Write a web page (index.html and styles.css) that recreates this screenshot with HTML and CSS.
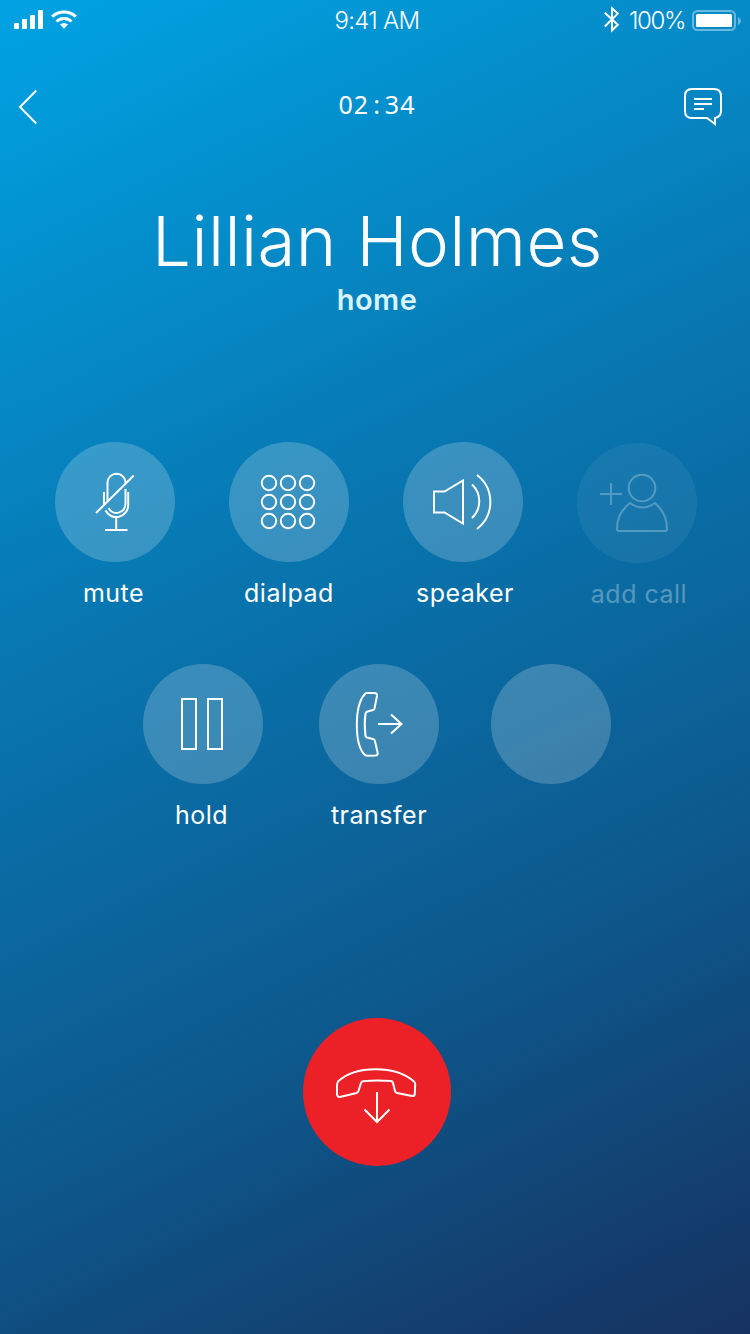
FILE: index.html
```html
<!DOCTYPE html>
<html lang="en">
<head>
    <meta charset="UTF-8">
    <meta name="viewport" content="width=device-width, initial-scale=1.0">
    <title>Call</title>
    <link rel="stylesheet" href="styles.css">
</head>
<body>
    <div class="status-bar">
        <div class="status-left">
            <svg class="signal" width="30" height="20" viewBox="0 0 30 20" fill="#fff">
                <rect x="0" y="13" width="5" height="6" rx="1"/>
                <rect x="8" y="9" width="5" height="10" rx="1"/>
                <rect x="16" y="5" width="5" height="14" rx="1"/>
                <rect x="24" y="0" width="5" height="19" rx="1"/>
            </svg>
            <svg class="wifi" width="26" height="19" viewBox="0 0 26 19">
                <path d="M1.2 6.7A17.2 17.2 0 0 1 24.8 6.7M5.5 11.5A11 11 0 0 1 20.5 11.5" fill="none" stroke="#fff" stroke-width="3"/>
                <path d="M9 14.5Q13 11.3 17 14.5L13 18.7Z" fill="#fff"/>
            </svg>
        </div>
        <div class="status-time">9:41 AM</div>
        <div class="status-right">
            <svg class="bluetooth" width="16" height="27" viewBox="0 0 16 27">
                <path d="M.8 6.8L13.8 18.7 8 24.3V2.3L13.8 7.6.8 20.5" fill="none" stroke="#fff" stroke-width="2"/>
            </svg>
            <span class="percent">100%</span>
            <svg class="battery" width="49" height="22" viewBox="0 0 49 22">
                <rect x="1" y="1" width="42" height="19" rx="4.5" fill="none" stroke="#fff" stroke-opacity=".4" stroke-width="2"/>
                <rect x="4" y="4" width="36" height="13" rx="1.5" fill="#fff"/>
                <path d="M46 7Q49 8.5 49 11T46 15Z" fill="#fff" fill-opacity=".4"/>
            </svg>
        </div>
    </div>

    <header class="nav">
        <svg class="back" width="20" height="36" viewBox="0 0 20 36">
            <path d="M18.2 1.5L2 18 18.2 34.5" fill="none" stroke="#fff" stroke-width="2"/>
        </svg>
        <div class="timer">02<span class="colon">:</span>34</div>
        <svg class="message" width="40" height="40" viewBox="0 0 40 40" fill="none" stroke="#fff" stroke-width="2">
            <path d="M9 2H31Q38 2 38 9V24Q38 30 32 31V37L24 31H9Q2 31 2 24V9Q2 2 9 2ZM11 12H29M11 17H29M11 22H21"/>
        </svg>
    </header>

    <div class="caller">
        <h1 class="name">Lillian Holmes</h1>
        <div class="kind">home</div>
    </div>

    <!-- Call controls -->
    <div class="row">
        <div class="action">
            <div class="circle">
                <svg viewBox="0 0 120 120">
                    <path d="M52.5 59V40.7A9 9 0 0 1 70.5 40.7V41M70.5 47V62A9 9 0 0 1 53.5 66M49 50V62.5M73.2 50V63A12 12 0 0 1 50.5 68.5M61.2 75.5V88M50 88H72.5M41 71L78.8 33.5"/>
                </svg>
            </div>
            <div class="label mute">mute</div>
        </div>
        <div class="action">
            <div class="circle">
                <svg viewBox="0 0 120 120">
                    <circle cx="40" cy="41" r="7.2"/><circle cx="59" cy="41" r="7.2"/><circle cx="78" cy="41" r="7.2"/>
                    <circle cx="40" cy="60" r="7.2"/><circle cx="59" cy="60" r="7.2"/><circle cx="78" cy="60" r="7.2"/>
                    <circle cx="40" cy="79" r="7.2"/><circle cx="59" cy="79" r="7.2"/><circle cx="78" cy="79" r="7.2"/>
                </svg>
            </div>
            <div class="label">dialpad</div>
        </div>
        <div class="action">
            <div class="circle">
                <svg viewBox="0 0 120 120">
                    <path d="M31 49.5H41.5L60 38.5V81.5L41.5 70.5H31ZM69 42.5A23 23 0 0 1 69 76M74 33A34 34 0 0 1 74 87"/>
                </svg>
            </div>
            <div class="label speaker">speaker</div>
        </div>
        <div class="action disabled">
            <div class="circle">
                <svg viewBox="0 0 120 120">
                    <path d="M23 51H45M34 40V62M53 60C44 67 40 75 40 86Q40 88 42 88H88Q90 88 90 86C90 75 86 67 78 60Q65 69 53 60Z"/>
                    <circle cx="65" cy="45" r="13.3"/>
                </svg>
            </div>
            <div class="label add">add call</div>
        </div>
    </div>

    <div class="row row-second">
        <div class="action">
            <div class="circle">
                <svg viewBox="0 0 120 120">
                    <path d="M39 35H53V85H39ZM65 35H79V85H65Z"/>
                </svg>
            </div>
            <div class="label hold">hold</div>
        </div>
        <div class="action transfer">
            <div class="circle">
                <svg viewBox="0 0 120 120">
                    <path d="M47.5 29H55Q58.5 29 58 32L55.5 44.500Q55.2 45.800 54 46L48.500 47.500Q47 48 46.500 49.500Q45 60 46.500 72Q46.700 73 48 73.500L54.500 75.300Q55.600 75.700 55.900 77L58.700 89Q59 91.200 56.500 91.500L48 91.700Q46.500 91.500 45.500 90.500C35.300 80 35.300 42 45.500 30.500Q46.500 29 47.500 29ZM59 60H83M72 50.500L82.500 60 72 69.500"/>
                </svg>
            </div>
            <div class="label">transfer</div>
        </div>
        <div class="action">
            <div class="circle"></div>
        </div>
    </div>

    <div class="end-call">
        <svg viewBox="0 0 148 148">
            <path d="M34 68V76Q34.5 79.5 37 79L53.5 75Q55 74.5 55.5 73L58 65Q58.5 63.3 60 63.2Q74 61.7 88 63Q89.5 63.2 90 65L92 73Q92.4 74.6 94 75L109 78Q111.5 78.3 111.8 76L112.2 66Q112.2 64.5 111 63.5C93 47 52 47 35 63.5Q34 65 34 68ZM74 74V104M61.5 91.5L74 104 86.5 91.5"/>
        </svg>
    </div>
</body>
</html>
```

FILE: styles.css
```css
* {
    box-sizing: border-box;
}
body {
    margin: 0;
    width: 750px;
    height: 1334px;
    overflow: hidden;
    font-family: Inter, "Liberation Sans", sans-serif;
    color: #fff;
    background: linear-gradient(154deg, #00a3e3 0%, #0876b0 40%, #0d598d 70%, #163260 100%);
}
svg {
    display: block;
}
.status-bar {
    height: 40px;
    padding: 0 9px 0 14px;
    display: grid;
    grid-template-columns: 1fr auto 1fr;
    font-size: 24px;
    font-weight: 300;
    line-height: 42px;
}
.status-left {
    display: flex;
    padding-top: 10px;
}
.wifi {
    margin-left: 7px;
}
.status-time {
    margin-left: -1px;
    letter-spacing: -0.7px;
}
.status-right {
    display: flex;
    justify-content: flex-end;
}
.bluetooth {
    margin-top: 6px;
}
.percent {
    margin: 0 7px 0 9px;
    letter-spacing: -1.4px;
}
.battery {
    margin-top: 10px;
}
.nav {
    height: 100px;
    padding: 47px 27px 0 18px;
    display: grid;
    grid-template-columns: 1fr auto 1fr;
}
.back {
    margin-top: 2px;
}
.timer {
    margin: -1px 0 0 13px;
    font-family: "Noto Sans", sans-serif;
    font-size: 25px;
    line-height: 36px;
    letter-spacing: 1px;
}
.colon {
    margin: 0 4px;
}
.message {
    justify-self: end;
}
.caller {
    padding-top: 57px;
    text-align: center;
    height: 302px;
}
.name {
    margin: 0 0 0 5px;
    font-size: 69px;
    font-weight: 300;
    line-height: 88px;
    letter-spacing: 0.4px;
}
.kind {
    margin: 1px 0 0 4px;
    font-size: 29px;
    font-weight: 600;
    line-height: 28px;
    letter-spacing: 0.5px;
    color: #d9f3ff;
}
.row {
    display: flex;
    gap: 54px;
    padding-left: 55px;
    height: 222px;
}
.row-second {
    padding-left: 143px;
}
.action {
    width: 120px;
}
.circle {
    width: 120px;
    height: 120px;
    border-radius: 50%;
    background: rgba(255, 255, 255, 0.2);
}
.circle svg, .end-call svg {
    fill: none;
    stroke: #fff;
    stroke-width: 2;
}
.label {
    font-size: 25px;
    line-height: 32px;
    letter-spacing: 0.5px;
    margin-top: 15px;
    text-align: center;
    white-space: nowrap;
}
.mute, .hold {
    margin-left: -3px;
}
.speaker, .add {
    margin-left: 4px;
}
.disabled {
    padding-top: 1px;
    opacity: 0.3;
}
.transfer {
    margin: 0 -2px 0 2px;
}
.end-call {
    width: 148px;
    height: 148px;
    margin: 132px 0 0 303px;
    border-radius: 50%;
    background: #ec2027;
}
```
